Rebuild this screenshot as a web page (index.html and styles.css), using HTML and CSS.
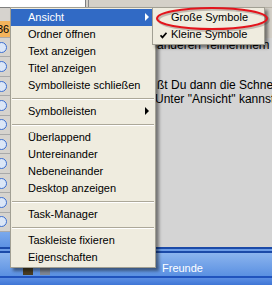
FILE: index.html
```html
<!DOCTYPE html>
<html>
  <head>
    <title>Kontextmenü Taskleiste</title>
    <meta charset="utf-8" />
    <link rel="stylesheet" href="styles.css">
  </head>
  <body>
    <div class="desk">
      <div class="top_strip">
        <div class="top_box"></div>
        <div class="top_rest"></div>
      </div>

      <div class="side">
        <div class="side_head"></div>
        <div class="side_badge">36</div>
        <div class="side_icons">
          <div class="side_icon"></div>
          <div class="side_icon"></div>
          <div class="side_icon"></div>
          <div class="side_icon"></div>
          <div class="side_icon"></div>
          <div class="side_icon"></div>
          <div class="side_icon"></div>
          <div class="side_icon"></div>
          <div class="side_icon"></div>
          <div class="side_icon"></div>
        </div>
        <div class="side_blue"></div>
      </div>

      <div class="pane">
        <div class="pane_top">
          <div class="pane_note"></div>
        </div>
        <div class="content">
          <p class="line_clip">anderen Teilnehmern</p>
          <p class="line_first">ßt Du dann die Schnellstartleiste</p>
          <p class="line_second">Unter "Ansicht" kannst Du</p>
        </div>
      </div>

      <div class="taskbar">
        <div class="tb_lines"></div>
        <div class="tb_main">
          <div class="tb_quick">
            <span class="qi qi_dark"></span>
            <span class="qi qi_grey"></span>
          </div>
          <div class="tb_btn">Freunde</div>
        </div>
        <div class="tb_foot"></div>
      </div>

      <!-- context menu of the taskbar -->
      <div class="ctx_menu">
        <div class="ctx_item active has_sub">Ansicht</div>
        <div class="ctx_item">Ordner öffnen</div>
        <div class="ctx_item">Text anzeigen</div>
        <div class="ctx_item">Titel anzeigen</div>
        <div class="ctx_item">Symbolleiste schließen</div>
        <div class="ctx_sep"></div>
        <div class="ctx_item has_sub">Symbolleisten</div>
        <div class="ctx_sep"></div>
        <div class="ctx_item">Überlappend</div>
        <div class="ctx_item">Untereinander</div>
        <div class="ctx_item">Nebeneinander</div>
        <div class="ctx_item">Desktop anzeigen</div>
        <div class="ctx_sep"></div>
        <div class="ctx_item">Task-Manager</div>
        <div class="ctx_sep"></div>
        <div class="ctx_item">Taskleiste fixieren</div>
        <div class="ctx_item">Eigenschaften</div>
      </div>

      <div class="ctx_sub">
        <div class="sub_item">Große Symbole</div>
        <div class="sub_item">
          <svg class="check" width="7" height="7" viewBox="0 0 7 7">
            <path d="M0.5 3.2 L2.5 5.4 L6.5 0.8" fill="none" stroke="#000" stroke-width="1.7" />
          </svg>
          Kleine Symbole
        </div>
      </div>

      <!-- red marker round the chosen entry -->
      <svg class="mark" width="122" height="32" viewBox="0 0 122 32">
        <ellipse cx="63.5" cy="17" rx="55" ry="10.5" fill="none" stroke="rgba(60,40,40,0.25)" stroke-width="2.5" />
        <ellipse cx="62" cy="15.5" rx="55" ry="10.5" fill="none" stroke="#e3141c" stroke-width="2" />
      </svg>
    </div>
  </body>
</html>
```

FILE: styles.css
```css
body {
  margin: 0;
  padding: 0;
  font-family: "Liberation Sans", Arial, sans-serif;
}
p {
  margin: 0;
  padding: 0;
}

.desk {
  position: relative;
  width: 272px;
  height: 285px;
  overflow: hidden;
  display: grid;
  grid-template-columns: 10px 1fr;
  grid-template-rows: 8px 239px 38px;
  background-color: #d4d0c8;
}

/* window behind the menu */
.top_strip {
  grid-column: 1 / 3;
  display: flex;
}
.top_box {
  width: 85px;
  background-color: #fff;
  border-right: 1px solid #7f7f7f;
  border-bottom: 1px solid #7f7f7f;
}
.top_rest {
  flex: 1;
  margin-left: 2px;
  border-left: 1px solid #8a8a8a;
  border-bottom: 1px solid #b8b4a8;
}

.side {
  display: flex;
  flex-direction: column;
  background-color: #d6d3ce;
}
.side_head {
  height: 13px;
}
.side_badge {
  height: 16px;
  background-color: #f4b45c;
  font-size: 11px;
  line-height: 16px;
  text-indent: -3px;
  white-space: nowrap;
  overflow: hidden;
}
.side_icons {
  flex: 1;
  display: flex;
  flex-direction: column;
  border-top: 1px solid #a9a9a9;
}
.side_icon {
  flex: 1;
  display: flex;
  align-items: center;
  border-bottom: 1px solid #a9a9a9;
}
.side_icon::before {
  content: "";
  width: 9px;
  height: 9px;
  margin-left: -4px;
  border-radius: 50%;
  border: 1.5px solid #3c6ed0;
  background-color: #dbe6f7;
}
.side_blue {
  height: 15px;
  background: linear-gradient(#7aa9ec, #5d92e3);
}

.pane {
  display: flex;
  flex-direction: column;
}
.pane_top {
  height: 30px;
  display: flex;
  justify-content: flex-end;
}
.pane_note {
  width: 7px;
  background-color: #fff;
  border-left: 1px solid #555;
}
.content {
  flex: 1;
  background-color: #d4d4d4;
  padding-left: 147px;
  font-size: 12px;
  line-height: 14px;
  white-space: nowrap;
  overflow: hidden;
}
.line_first {
  margin-top: 26px;
}
.line_second {
  margin-left: -2px;
}

/* XP taskbar */
.taskbar {
  grid-column: 1 / 3;
  display: flex;
  flex-direction: column;
}
.tb_lines {
  height: 6px;
  background: linear-gradient(
    #1b4aa8 0,
    #1b4aa8 2px,
    #6c9ce6 2px,
    #6c9ce6 4px,
    #1b4aa8 4px,
    #1b4aa8 6px
  );
}
.tb_main {
  height: 23px;
  display: flex;
  background: linear-gradient(#8cb5ee, #5a90e2);
}
.tb_quick {
  width: 160px;
  padding-left: 23px;
  display: flex;
  align-items: flex-end;
  gap: 7px;
  box-sizing: border-box;
}
.qi {
  width: 10px;
  height: 9px;
  margin-bottom: 1px;
}
.qi_dark {
  background-color: #4a3d22;
}
.qi_grey {
  background-color: #7f8793;
}
.tb_btn {
  padding-top: 8px;
  padding-left: 2px;
  font-size: 11px;
  line-height: 14px;
  color: #fff;
}
.tb_foot {
  flex: 1;
  border-top: 2px solid #2053bd;
  background: linear-gradient(#5b8ee3, #3f76d6);
}

/* context menu */
.ctx_menu,
.ctx_sub {
  position: absolute;
  top: 7px;
  box-sizing: border-box;
  padding: 1px 0;
  border: 1px solid #a19f93;
  background-color: #efecdf;
  box-shadow: 3px 3px 3px rgba(0, 0, 0, 0.45);
  font-size: 11px;
  color: #000;
}
.ctx_menu {
  left: 10px;
  width: 146px;
}
.ctx_item {
  position: relative;
  height: 17px;
  line-height: 17px;
  padding-left: 17px;
  white-space: nowrap;
}
.ctx_item.active {
  background-color: #316ac5;
  color: #fff;
}
.has_sub::after {
  content: "";
  position: absolute;
  right: 6px;
  top: 4px;
  border-left: 4px solid #000;
  border-top: 4px solid transparent;
  border-bottom: 4px solid transparent;
}
.active.has_sub::after {
  border-left-color: #fff;
}
.ctx_sep {
  margin: 4px 1px 3px 1px;
  border-top: 1px solid #aca899;
  border-bottom: 1px solid #fff;
}

.ctx_sub {
  left: 152px;
  width: 113px;
}
.sub_item {
  position: relative;
  height: 17px;
  line-height: 17px;
  padding-left: 18px;
  white-space: nowrap;
}
.check {
  position: absolute;
  left: 7px;
  top: 6px;
}

.mark {
  position: absolute;
  left: 150px;
  top: 3px;
}
```
